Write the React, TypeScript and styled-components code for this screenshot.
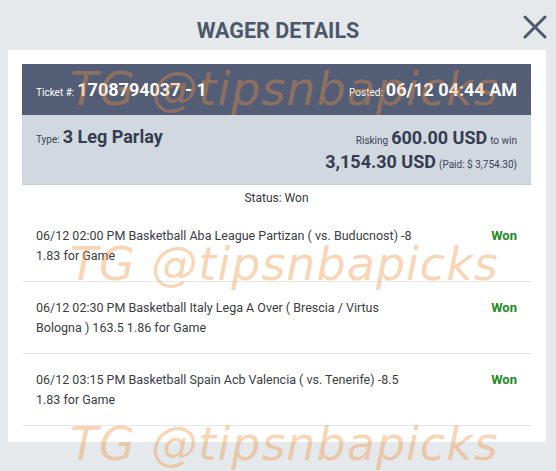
import React from "react";
import styled, { createGlobalStyle } from "styled-components";

const Global = createGlobalStyle`
  html, body { margin: 0; padding: 0; }
  body {
    background: #e6e9ec;
    font-family: Roboto, "Liberation Sans", Arial, sans-serif;
    width: 556px;
    height: 471px;
    overflow: hidden;
  }
`;

const Page = styled.div`
  position: relative;
  width: 556px;
  height: 471px;
  background: #e6e9ec;
  overflow: hidden;
`;

const TitleBar = styled.div`
  position: relative;
  height: 50px;
  display: flex;
  align-items: center;
  justify-content: center;
`;

const Title = styled.h1`
  margin: 10px 0 0 0;
  font-size: 21.5px;
  font-weight: 700;
  color: #4e586b;
`;

const CloseButton = styled.button`
  position: absolute;
  right: 9px;
  top: 15px;
  width: 24px;
  height: 24px;
  padding: 0;
  border: none;
  background: none;
  display: flex;
  align-items: center;
  justify-content: center;
`;

const Panel = styled.div`
  margin: 0 10px 0 8px;
  background: #ffffff;
  padding: 14px 15px 16px 14px;
`;

const TicketBar = styled.div`
  height: 51px;
  background: #535d75;
  color: #ffffff;
  display: flex;
  align-items: center;
  justify-content: space-between;
  padding: 0 14px;
`;

const Pair = styled.div`
  display: flex;
  align-items: baseline;
  gap: 3px;
`;

const SmallLabel = styled.span<{ $light?: boolean }>`
  font-size: 10px;
  color: ${(p) => (p.$light ? "#ffffff" : "#3b4457")};
`;

const BigValue = styled.span<{ $light?: boolean }>`
  font-size: 18px;
  font-weight: 700;
  color: ${(p) => (p.$light ? "#ffffff" : "#343d50")};
`;

const InfoBar = styled.div`
  box-sizing: border-box;
  height: 70px;
  background: #d1d8e0;
  border-bottom: 1px solid #c4cbd4;
  display: flex;
  justify-content: space-between;
  align-items: flex-start;
  padding: 11px 14px 0 14px;
`;

const AmountBlock = styled.div`
  display: flex;
  flex-direction: column;
  align-items: flex-end;
  margin-top: 1px;
`;

const AmountLine = styled.div`
  display: flex;
  align-items: baseline;
  gap: 3px;
  line-height: 21px;
`;

const Status = styled.div`
  height: 25px;
  line-height: 26px;
  text-align: center;
  font-size: 12px;
  color: #333840;
`;

const LegRow = styled.div`
  display: flex;
  justify-content: space-between;
  align-items: flex-start;
  padding: 16px 14px 16px 14px;
  border-bottom: 1px solid #e6e8eb;
`;

const LegText = styled.div`
  max-width: 385px;
  font-size: 12.5px;
  line-height: 19.5px;
  color: #3a3d42;
`;

const LegResult = styled.div`
  font-size: 13px;
  line-height: 19.5px;
  font-weight: 700;
  color: #1f8a1f;
`;

const Watermark = styled.div<{ $top: number }>`
  position: absolute;
  left: 70px;
  top: ${(p) => p.$top}px;
  font-family: "DejaVu Sans", Verdana, sans-serif;
  font-style: oblique;
  font-size: 46px;
  letter-spacing: 1px;
  line-height: 1;
  color: rgba(238, 145, 60, 0.38);
  white-space: nowrap;
  pointer-events: none;
`;

const legs = [
  "06/12 02:00 PM Basketball Aba League Partizan ( vs. Buducnost) -8 1.83 for Game",
  "06/12 02:30 PM Basketball Italy Lega A Over ( Brescia / Virtus Bologna ) 163.5 1.86 for Game",
  "06/12 03:15 PM Basketball Spain Acb Valencia ( vs. Tenerife) -8.5 1.83 for Game",
];

export default function App() {
  return (
    <Page>
      <Global />
      <TitleBar>
        <Title>WAGER DETAILS</Title>
        <CloseButton aria-label="Close">
          <svg width="24" height="24" viewBox="0 0 24 24">
            <path
              d="M2 2 L22 22 M22 2 L2 22"
              stroke="#4e586b"
              strokeWidth="3"
              strokeLinecap="round"
              fill="none"
            />
          </svg>
        </CloseButton>
      </TitleBar>
      <Panel>
        <TicketBar>
          <Pair>
            <SmallLabel $light>Ticket #:</SmallLabel>
            <BigValue $light>1708794037 - 1</BigValue>
          </Pair>
          <Pair>
            <SmallLabel $light>Posted:</SmallLabel>
            <BigValue $light>06/12 04:44 AM</BigValue>
          </Pair>
        </TicketBar>
        <InfoBar>
          <Pair>
            <SmallLabel>Type:</SmallLabel>
            <BigValue>3 Leg Parlay</BigValue>
          </Pair>
          <AmountBlock>
            <AmountLine>
              <SmallLabel>Risking</SmallLabel>
              <BigValue>600.00 USD</BigValue>
              <SmallLabel>to win</SmallLabel>
            </AmountLine>
            <AmountLine>
              <BigValue>3,154.30 USD</BigValue>
              <SmallLabel>(Paid: $ 3,754.30)</SmallLabel>
            </AmountLine>
          </AmountBlock>
        </InfoBar>
        <Status>Status: Won</Status>
        {legs.map((l) => (
          <LegRow key={l}>
            <LegText>{l}</LegText>
            <LegResult>Won</LegResult>
          </LegRow>
        ))}
      </Panel>
      <Watermark $top={66}>TG @tipsnbapicks</Watermark>
      <Watermark $top={241}>TG @tipsnbapicks</Watermark>
      <Watermark $top={421}>TG @tipsnbapicks</Watermark>
    </Page>
  );
}
